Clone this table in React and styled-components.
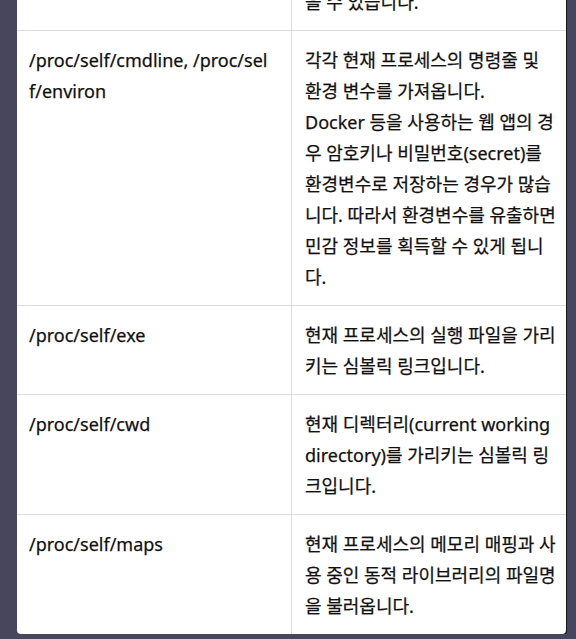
import styled, { createGlobalStyle } from 'styled-components'

const rows = [
	{ path: '', desc: ['을 수 있습니다.'] },
	{
		path: '/proc/self/cmdline, /proc/self/environ',
		desc: [
			'각각 현재 프로세스의 명령줄 및 환경 변수를 가져옵니다.',
			'Docker 등을 사용하는 웹 앱의 경우 암호키나 비밀번호(secret)를 환경변수로 저장하는 경우가 많습니다. 따라서 환경변수를 유출하면 민감 정보를 획득할 수 있게 됩니다.',
		],
	},
	{ path: '/proc/self/exe', desc: ['현재 프로세스의 실행 파일을 가리키는 심볼릭 링크입니다.'] },
	{
		path: '/proc/self/cwd',
		desc: ['현재 디렉터리(current working directory)를 가리키는 심볼릭 링크입니다.'],
	},
	{
		path: '/proc/self/maps',
		desc: ['현재 프로세스의 메모리 매핑과 사용 중인 동적 라이브러리의 파일명을 불러옵니다.'],
	},
]

export default function App() {
	return (
		<>
			<GlobalStyle />
			<Page>
				<Card>
					{rows.map((row, i) => (
						<Row key={i} $first={i === 0}>
							<PathCell>{row.path}</PathCell>
							<DescCell>
								{row.desc.map((line, j) => (
									<span key={j}>
										{j > 0 && <br />}
										{line}
									</span>
								))}
							</DescCell>
						</Row>
					))}
				</Card>
			</Page>
		</>
	)
}

const GlobalStyle = createGlobalStyle`
	html {
		overflow: hidden;
		background: #48465c;
	}
	body {
		margin: 0;
		padding: 0;
	}
`

const Page = styled.div`
	display: flow-root;
	padding-left: 17px;
`

const Card = styled.div`
	width: 549px;
	margin-top: -27px;
	background: #fff;
	border-radius: 4px;
	box-shadow: 1px 1px 0 #15141c;
	overflow: hidden;
	font-family: 'Noto Sans', 'Noto Sans CJK KR', sans-serif;
	font-size: 18px;
	line-height: 31px;
	color: #111;
	-webkit-text-stroke: 0.25px #111;
`

const Row = styled.div`
	display: grid;
	grid-template-columns: 275px 1fr;
	border-top: ${(p) => (p.$first ? 'none' : '1px solid #dddce3')};
`

const Cell = styled.div`
	padding-top: 14px;
	padding-bottom: 12px;
	word-break: break-all;
`

const PathCell = styled(Cell)`
	padding-left: 12px;
	padding-right: 20px;
	border-right: 1px solid #dddce3;
`

const DescCell = styled(Cell)`
	padding-left: 13px;
	padding-right: 9px;
`
